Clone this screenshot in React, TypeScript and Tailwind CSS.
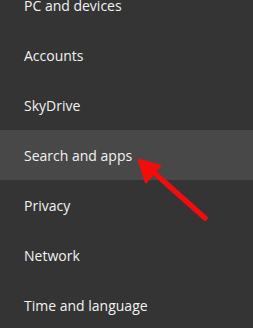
export default function App() {
  const items = [
    "PC and devices",
    "Accounts",
    "SkyDrive",
    "Search and apps",
    "Privacy",
    "Network",
    "Time and language",
  ];
  return (
    <div className="relative w-[253px] h-[328px] overflow-hidden bg-[#343434]" style={{ fontFamily: '"Open Sans", "Noto Sans", sans-serif' }}>
      <div className="flex flex-col -mt-[20px]">
        {items.map((t) => (
          <div
            key={t}
            className={`h-[50px] flex items-center pl-[24px] text-[14px] text-[#f2f2f2] ${t === "Search and apps" ? "bg-[#484848]" : ""}`}
          >
            {t}
          </div>
        ))}
      </div>
      <svg className="absolute left-0 top-0" width="253" height="328" viewBox="0 0 253 328">
        <line x1="205" y1="218" x2="150" y2="169" stroke="#f20d0d" strokeWidth="5.5" strokeLinecap="round" />
        <polygon points="139,160 160,166 146,182" fill="#f20d0d" stroke="#f20d0d" strokeWidth="2.5" strokeLinejoin="round" />
      </svg>
    </div>
  );
}
